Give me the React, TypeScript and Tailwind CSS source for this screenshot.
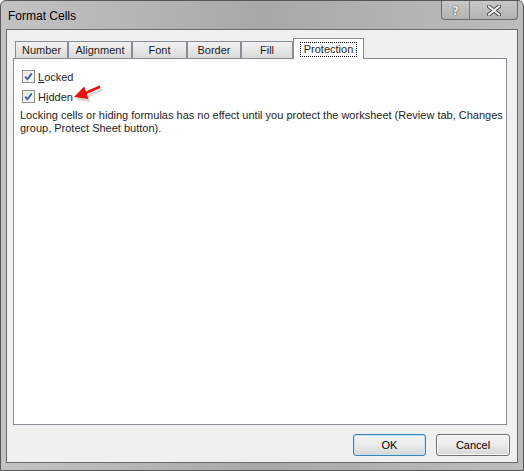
import React from 'react';

const tabs = [
  { label: 'Number', w: 'w-[53px]' },
  { label: 'Alignment', w: 'w-[64px]' },
  { label: 'Font', w: 'w-[55px]' },
  { label: 'Border', w: 'w-[54px]' },
  { label: 'Fill', w: 'w-[52px]' },
];

const Check = () => (
  <div className="w-[13px] h-[13px] border border-[#8e8f8f] bg-gradient-to-br from-[#dcdcdc] to-[#f8f8f8] flex items-center justify-center">
    <div className="w-[11px] h-[11px] border border-[#f4f4f4] bg-gradient-to-br from-[#e6e6e6] to-[#fdfdfd] flex items-center justify-center">
      <svg width="9" height="9" viewBox="0 0 9 9">
        <path d="M1.2 4.6 L3.4 7.2 L7.8 1.4" fill="none" stroke="#3b5fa0" strokeWidth="1.8" strokeLinejoin="miter" />
      </svg>
    </div>
  </div>
);

const arrow = 'M10 17 L20.2 6.6 L21.8 11.4 L35.5 5.5 L36.5 8.1 L22.8 14.1 L24.4 18.9 Z';

export default function App() {
  return (
    <div className="w-[524px] h-[471px] bg-white font-['Liberation_Sans',sans-serif] text-[11px] text-[#1e1e1e]">
      <div className="w-full h-full rounded-t-[6px] border border-[#575757] bg-gradient-to-r from-[#c3c3c3] via-[#a8a8a8] to-[#bdbdbd] flex flex-col">
        {/* Title bar */}
        <div className="h-[28px] shrink-0 flex justify-between">
          <div className="pl-[7px] pt-[6px] text-[12px] text-black">Format Cells</div>
          <div className="mr-[5px] flex h-[19px] border border-t-0 border-[#6b6b6b] rounded-b-[4px] overflow-hidden bg-gradient-to-b from-[#c8c8c8] to-[#b2b2b2]">
            <div className="w-[28px] h-full border-r border-[#7a7a7a] flex items-center justify-center">
              <span className="font-['DejaVu_Sans',sans-serif] font-bold text-[13px] leading-none text-[#ececec] [text-shadow:0_0_1px_#333,0_0_1px_#333]">?</span>
            </div>
            <div className="w-[47px] h-full flex items-center justify-center">
              <svg width="14" height="11" viewBox="0 0 14 11">
                <path d="M2 1.5 L12 9.5 M12 1.5 L2 9.5" stroke="#4a4a4a" strokeWidth="4" strokeLinecap="square" />
                <path d="M2 1.5 L12 9.5 M12 1.5 L2 9.5" stroke="#eeeeee" strokeWidth="2" strokeLinecap="square" />
              </svg>
            </div>
          </div>
        </div>

        {/* Client */}
        <div className="mx-[5px] h-[434px] border border-[#6a6a6a] bg-[#f0f0f0] flex flex-col">
          {/* Tabs */}
          <div className="pt-[7px] pl-[8px] flex items-end h-[28px]">
            {tabs.map((t) => (
              <div
                key={t.label}
                className={`${t.w} h-[17px] border border-b-0 border-[#898c95] bg-gradient-to-b from-[#f2f2f2] to-[#dadada] flex items-center justify-center pt-px text-[#1e1e1e]`}
              >
                {t.label}
              </div>
            ))}
            <div className="w-[71px] h-[21px] -mb-px relative z-10 border border-b-0 border-[#898c95] bg-white flex items-start justify-center pt-[3px]">
              <span className="border border-dotted border-black px-[3px] leading-[13px]">Protection</span>
            </div>
          </div>

          {/* Panel */}
          <div className="ml-[6px] w-[494px] h-[367px] border border-[#898c95] bg-white relative">
            <div className="pl-[8px] pt-[11px] flex flex-col gap-[7px]">
              <div className="flex items-center gap-[3px] h-[13px]">
                <Check />
                <span className="pt-px"><span className="underline">L</span>ocked</span>
              </div>
              <div className="flex items-center gap-[3px] h-[13px]">
                <Check />
                <span className="pt-px">H<span className="underline">i</span>dden</span>
              </div>
            </div>
            <p className="pl-[6px] pt-[6px] leading-[13px] w-[492px]">
              Locking cells or hiding formulas has no effect until you protect the worksheet (Review tab, Changes group, Protect Sheet button).
            </p>
            <svg className="absolute left-[50px] top-[21px]" width="45" height="26" viewBox="0 0 45 26">
              <path d={arrow} fill="#7a7a7a" opacity="0.3" transform="translate(2 3)" />
              <path d={arrow} fill="#e8120c" />
            </svg>
          </div>

          {/* Buttons */}
          <div className="flex justify-end gap-[10px] pr-[7px] mt-[9px]">
            <button className="w-[73px] h-[22px] rounded-[3px] border border-[#3c7fb1] bg-gradient-to-b from-[#f2f2f2] via-[#ebebeb] to-[#d6d6d6] shadow-[inset_0_0_0_1px_#bfe4f8] text-black">
              OK
            </button>
            <button className="w-[74px] h-[22px] rounded-[3px] border border-[#707070] bg-gradient-to-b from-[#f2f2f2] via-[#ebebeb] to-[#d6d6d6] shadow-[inset_0_0_0_1px_#fbfbfb] text-black">
              Cancel
            </button>
          </div>
        </div>
      </div>
    </div>
  );
}
